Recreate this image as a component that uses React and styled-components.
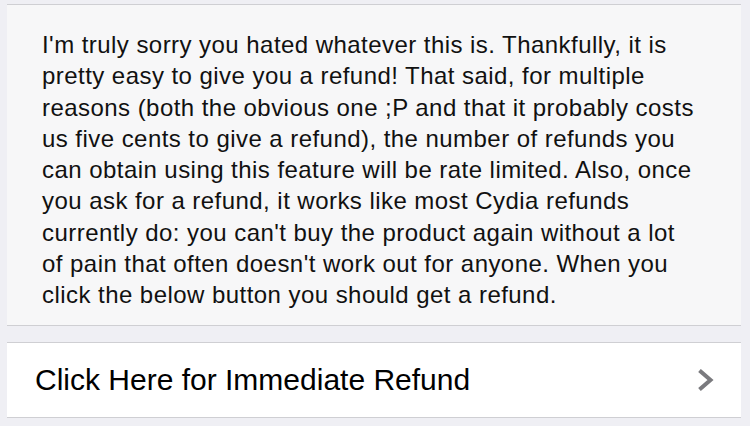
import React from "react";
import styled, { createGlobalStyle } from "styled-components";

const GlobalStyle = createGlobalStyle`
  html, body {
    margin: 0;
    padding: 0;
    background: #efeff4;
  }
  body {
    font-family: "Liberation Sans", Arial, sans-serif;
    -webkit-font-smoothing: antialiased;
  }
`;

const Page = styled.div`
  width: 750px;
  height: 426px;
  background: #efeff4;
  padding: 4px 9px 0 7px;
  box-sizing: border-box;
  display: flex;
  flex-direction: column;
  gap: 16px;
  overflow: hidden;
`;

const Group = styled.section`
  background: ${({ $plain }) => ($plain ? "#ffffff" : "#f7f7f8")};
  border-top: 1px solid #cfcfd3;
  border-bottom: 1px solid #cfcfd3;
`;

const Message = styled.p`
  margin: 0;
  padding: 24px 10px 14px 35px;
  font-size: 24px;
  letter-spacing: 0.45px;
  line-height: 31.3px;
  color: #111;
  white-space: nowrap;
`;

const Row = styled.button`
  width: 100%;
  height: 74px;
  display: flex;
  align-items: center;
  justify-content: space-between;
  padding: 0 26px 0 28px;
  border: none;
  background: transparent;
  font-family: inherit;
  font-size: 30px;
  color: #000;
  cursor: pointer;
  text-align: left;
`;

const Chevron = () => (
  <svg width="17" height="22" viewBox="0 0 17 22">
    <path
      d="M3 2.8 L12.5 11 L3 19.2"
      fill="none"
      stroke="#7a7a7e"
      strokeWidth="4"
      strokeLinecap="square"
    />
  </svg>
);

const lines = [
  "I'm truly sorry you hated whatever this is. Thankfully, it is",
  "pretty easy to give you a refund! That said, for multiple",
  "reasons (both the obvious one ;P and that it probably costs",
  "us five cents to give a refund), the number of refunds you",
  "can obtain using this feature will be rate limited. Also, once",
  "you ask for a refund, it works like most Cydia refunds",
  "currently do: you can't buy the product again without a lot",
  "of pain that often doesn't work out for anyone. When you",
  "click the below button you should get a refund.",
];

export default function App() {
  return (
    <>
      <GlobalStyle />
      <Page>
        <Group>
          <Message>
            {lines.map((l, i) => (
              <React.Fragment key={i}>
                {l}
                {i < lines.length - 1 && <br />}
              </React.Fragment>
            ))}
          </Message>
        </Group>
        <Group $plain>
          <Row>
            <span>Click Here for Immediate Refund</span>
            <Chevron />
          </Row>
        </Group>
      </Page>
    </>
  );
}
